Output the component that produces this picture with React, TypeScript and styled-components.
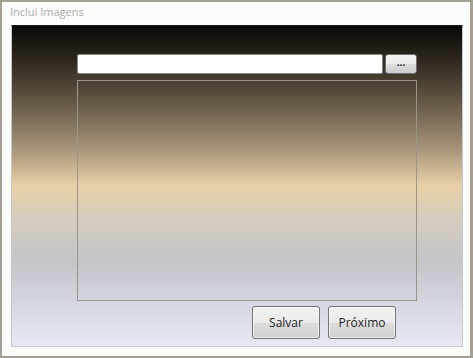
import React from "react";
import styled, { createGlobalStyle } from "styled-components";

const GlobalStyle = createGlobalStyle`
  html, body {
    margin: 0;
    padding: 0;
    background: #ffffff;
  }
  * {
    box-sizing: border-box;
  }
`;

const Window = styled.div`
  width: 473px;
  height: 358px;
  border: 2px solid #a49f95;
  border-right-width: 3px;
  background: #fbfbfa;
  padding: 0 7px 9px 9px;
  display: flex;
  flex-direction: column;
  font-family: "Open Sans", "DejaVu Sans", sans-serif;
`;

const Title = styled.div`
  height: 23px;
  padding: 2px 0 0 0;
  margin-left: -1px;
  font-size: 11px;
  color: #acacac;
`;

const Panel = styled.div`
  flex: 1;
  border: 1px solid #c8c8cc;
  border-top-color: #1a1714;
  background: linear-gradient(
    to bottom,
    #090806 0%,
    #2c261d 10%,
    #655846 24%,
    #a59378 38%,
    #e9d0a6 50%,
    #d6cdbe 60%,
    #c4c4c9 73%,
    #d3d6df 86%,
    #e7eaf4 100%
  );
  padding: 28px 0 0 65px;
  display: flex;
  flex-direction: column;
`;

const PathRow = styled.div`
  display: flex;
  gap: 2px;
  width: 340px;
  height: 20px;
`;

const PathInput = styled.input`
  flex: 1;
  height: 20px;
  border: 1px solid #8c8a86;
  border-radius: 2px;
  background: #ffffff;
  padding: 0 3px;
  font-size: 11px;
  outline: none;
`;

const BrowseButton = styled.button`
  width: 32px;
  height: 20px;
  border: 1px solid #707070;
  border-radius: 3px;
  background: linear-gradient(to bottom, #f3f3f3 0%, #ebebeb 50%, #dddddd 50%, #cfcfcf 100%);
  font-family: "Open Sans", "DejaVu Sans", sans-serif;
  font-size: 10px;
  font-weight: bold;
  line-height: 10px;
  color: #222;
  padding: 0 0 4px;
`;

const ImageArea = styled.div`
  margin-top: 6px;
  width: 340px;
  height: 221px;
  border: 1px solid #98958d;
`;

const ButtonRow = styled.div`
  display: flex;
  justify-content: flex-end;
  gap: 8px;
  width: 319px;
  margin-top: 5px;
`;

const ActionButton = styled.button`
  width: 68px;
  height: 33px;
  border: 1px solid #707070;
  border-radius: 3px;
  background: linear-gradient(to bottom, #f2f2f2 0%, #ebebeb 50%, #dddddd 50%, #cfcfcf 100%);
  box-shadow: inset 0 0 0 1px rgba(255, 255, 255, 0.7);
  font-family: "Open Sans", "DejaVu Sans", sans-serif;
  font-size: 12px;
  color: #1e1e1e;
  padding: 0;
`;

export default function App() {
  return (
    <>
      <GlobalStyle />
      <Window>
        <Title>Inclui Imagens</Title>
        <Panel>
          <PathRow>
            <PathInput type="text" />
            <BrowseButton type="button">...</BrowseButton>
          </PathRow>
          <ImageArea />
          <ButtonRow>
            <ActionButton type="button">Salvar</ActionButton>
            <ActionButton type="button">Próximo</ActionButton>
          </ButtonRow>
        </Panel>
      </Window>
    </>
  );
}
